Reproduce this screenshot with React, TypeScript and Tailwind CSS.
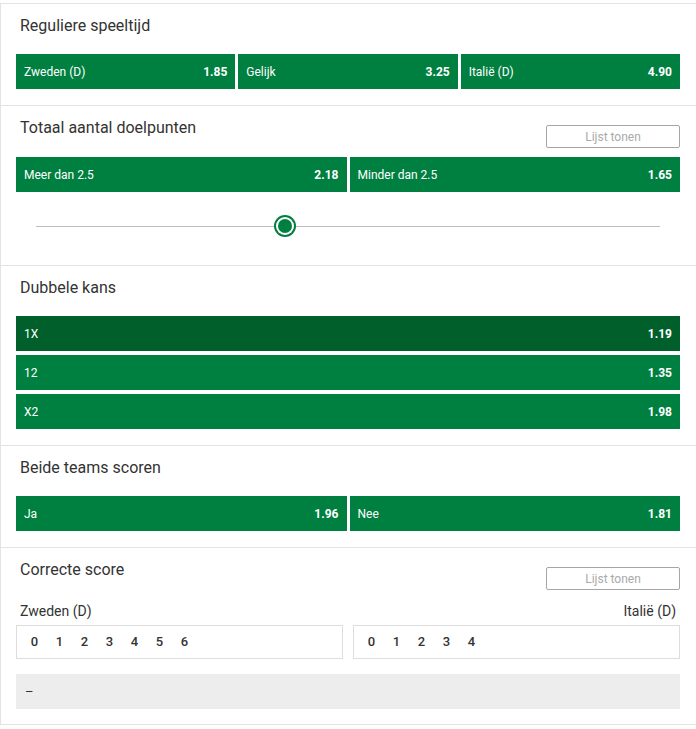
import React from "react";

const font = "font-['Roboto','Liberation_Sans',sans-serif]";

function Odd({ label, odd, dark }: { label: string; odd: string; dark?: boolean }) {
  return (
    <div
      className={`flex h-[35px] items-center justify-between px-2 text-[12px] text-white ${
        dark ? "bg-[#005f2b]" : "bg-[#008040]"
      }`}
    >
      <span>{label}</span>
      <span className="font-bold">{odd}</span>
    </div>
  );
}

function ListButton() {
  return (
    <button className="mt-[19px] flex h-[23px] w-[134px] items-center justify-center rounded-[2px] border border-[#a6a6a6] text-[12px] text-[#aaa]">
      Lijst tonen
    </button>
  );
}

function Header({ title, list, h = "h-[50px]" }: { title: string; list?: boolean; h?: string }) {
  return (
    <div className={`flex items-start justify-between ${h}`}>
      <h2 className="pl-1 pt-[10px] text-[16px] leading-[24px] text-[#333]">{title}</h2>
      {list && <ListButton />}
    </div>
  );
}

function ScoreBox({ n }: { n: number }) {
  return (
    <div className="flex h-[34px] items-center border border-[#ddd] pl-[5px]">
      {Array.from({ length: n }, (_, i) => (
        <span key={i} className="w-[25px] text-center text-[13px] font-medium text-[#333]">
          {i}
        </span>
      ))}
    </div>
  );
}

export default function App() {
  return (
    <div className={`min-h-screen bg-white pt-[3px] ${font}`}>
      <div className="border-l border-[#e3e3e3]">
        <section className="border-t border-[#e3e3e3] pb-4 pl-[15px] pr-4">
          <Header title="Reguliere speeltijd" />
          <div className="grid grid-cols-3 gap-[3px]">
            <Odd label="Zweden (D)" odd="1.85" />
            <Odd label="Gelijk" odd="3.25" />
            <Odd label="Italië (D)" odd="4.90" />
          </div>
        </section>

        <section className="border-t border-[#e3e3e3] pl-[15px] pr-4">
          <Header title="Totaal aantal doelpunten" list h="h-[51px]" />
          <div className="grid grid-cols-2 gap-[3px]">
            <Odd label="Meer dan 2.5" odd="2.18" />
            <Odd label="Minder dan 2.5" odd="1.65" />
          </div>
          <div className="px-5 pb-[28px] pt-[23px]">
            <div className="relative flex h-[22px] items-center">
              <div className="h-px w-full bg-[#bdbdbd]" />
              <div className="absolute left-[238px] top-0 flex h-[22px] w-[22px] items-center justify-center rounded-full bg-[#008040]">
                <div className="flex h-[18px] w-[18px] items-center justify-center rounded-full bg-white">
                  <div className="h-[14px] w-[14px] rounded-full bg-[#008040]" />
                </div>
              </div>
            </div>
          </div>
        </section>

        <section className="border-t border-[#e3e3e3] pb-4 pl-[15px] pr-4">
          <Header title="Dubbele kans" />
          <div className="flex flex-col gap-[4px]">
            <Odd label="1X" odd="1.19" dark />
            <Odd label="12" odd="1.35" />
            <Odd label="X2" odd="1.98" />
          </div>
        </section>

        <section className="border-t border-[#e3e3e3] pb-4 pl-[15px] pr-4">
          <Header title="Beide teams scoren" />
          <div className="grid grid-cols-2 gap-[3px]">
            <Odd label="Ja" odd="1.96" />
            <Odd label="Nee" odd="1.81" />
          </div>
        </section>

        <section className="border-t border-b border-[#e3e3e3] pb-[15px] pl-[15px] pr-4">
          <Header title="Correcte score" list />
          <div className="flex h-[27px] items-start justify-between pt-[3px] text-[14px] leading-[20px] text-[#333]">
            <span className="pl-1">Zweden (D)</span>
            <span className="pr-1">Italië (D)</span>
          </div>
          <div className="grid grid-cols-2 gap-[10px]">
            <ScoreBox n={7} />
            <ScoreBox n={5} />
          </div>
          <div className="mt-[15px] flex h-[35px] items-center bg-[#ededed] pl-[9px] text-[13px] text-[#333]">
            –
          </div>
        </section>
      </div>
    </div>
  );
}
